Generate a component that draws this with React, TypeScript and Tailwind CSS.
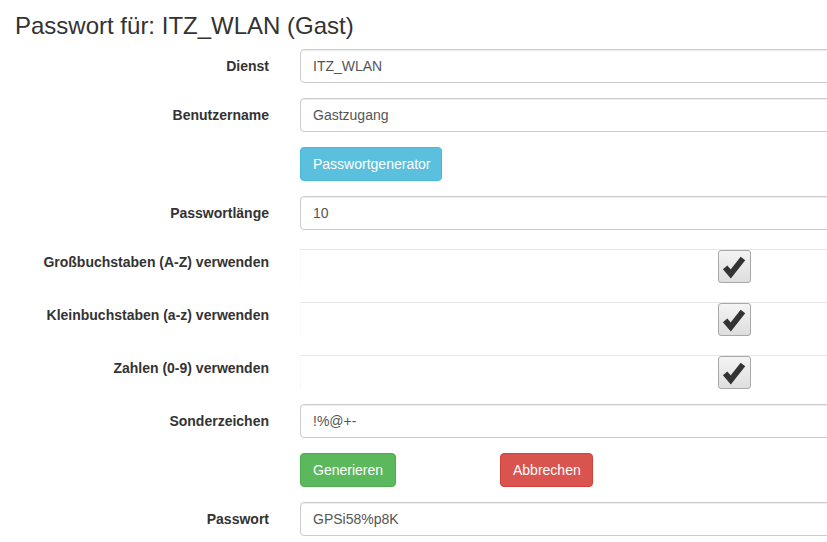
import React from "react";

const font = { fontFamily: '"Liberation Sans", Arial, Helvetica, sans-serif' };

function Label({ children }: { children: React.ReactNode }) {
  return (
    <div className="w-[269px] shrink-0 text-right pt-[7px] text-[14px] leading-[20px] font-bold text-[#333]">
      {children}
    </div>
  );
}

function Input({ value }: { value: string }) {
  return (
    <div className="w-[620px] h-[34px] shrink-0 border border-[#ccc] rounded-[4px] bg-white px-[12px] py-[6px] text-[14px] leading-[20px] text-[#555] shadow-[inset_0_1px_1px_rgba(0,0,0,0.075)]">
      {value}
    </div>
  );
}

function Row({ label, children }: { label?: string; children: React.ReactNode }) {
  return (
    <div className="flex">
      <Label>{label}</Label>
      <div className="ml-[31px]">{children}</div>
    </div>
  );
}

function CheckRow({ label }: { label: string }) {
  return (
    <div className="flex h-[38px]">
      <Label>{label}</Label>
      <div className="ml-[31px] pt-[4px]">
        <div className="w-[620px] h-[34px] border-t border-l border-t-[#e8e8e8] border-l-[#f8f8f8]">
          <div className="ml-[417px] w-[33px] h-[33px] border border-[#a8a8a8] rounded-[3px] bg-gradient-to-b from-[#f4f4f4] to-[#dedede] flex items-center justify-center">
            <svg width="33" height="33" viewBox="0 0 33 33">
              <path d="M6.5 17.5 L12.5 24.5 L25.5 8" fill="none" stroke="#333" strokeWidth="6.2" strokeLinejoin="miter" strokeLinecap="butt" />
            </svg>
          </div>
        </div>
      </div>
    </div>
  );
}

function Btn({ children, cls }: { children: React.ReactNode; cls: string }) {
  return (
    <div className={`h-[34px] px-[12px] py-[6px] text-[14px] leading-[20px] text-white text-center border rounded-[4px] ${cls}`}>
      {children}
    </div>
  );
}

export default function App() {
  return (
    <div className="w-[827px] h-[542px] overflow-hidden bg-white" style={font}>
      <h3 className="ml-[15px] mt-[13px] text-[24px] leading-[26px] text-[#333] font-normal">
        Passwort für: ITZ_WLAN (Gast)
      </h3>
      <div className="mt-[10px] flex flex-col gap-[15px]">
        <Row label="Dienst"><Input value="ITZ_WLAN" /></Row>
        <Row label="Benutzername"><Input value="Gastzugang" /></Row>
        <Row>
          <div className="flex">
            <Btn cls="bg-[#5bc0de] border-[#46b8da] w-[142px] px-[0px]">Passwortgenerator</Btn>
          </div>
        </Row>
        <Row label="Passwortlänge"><Input value="10" /></Row>
        <CheckRow label="Großbuchstaben (A-Z) verwenden" />
        <CheckRow label="Kleinbuchstaben (a-z) verwenden" />
        <CheckRow label="Zahlen (0-9) verwenden" />
        <Row label="Sonderzeichen"><Input value="!%@+-" /></Row>
        <Row>
          <div className="flex">
            <Btn cls="bg-[#5cb85c] border-[#4cae4c] w-[96px]">Generieren</Btn>
            <div className="ml-[104px]">
              <Btn cls="bg-[#d9534f] border-[#d43f3a] w-[93px]">Abbrechen</Btn>
            </div>
          </div>
        </Row>
        <Row label="Passwort"><Input value="GPSi58%p8K" /></Row>
      </div>
    </div>
  );
}
